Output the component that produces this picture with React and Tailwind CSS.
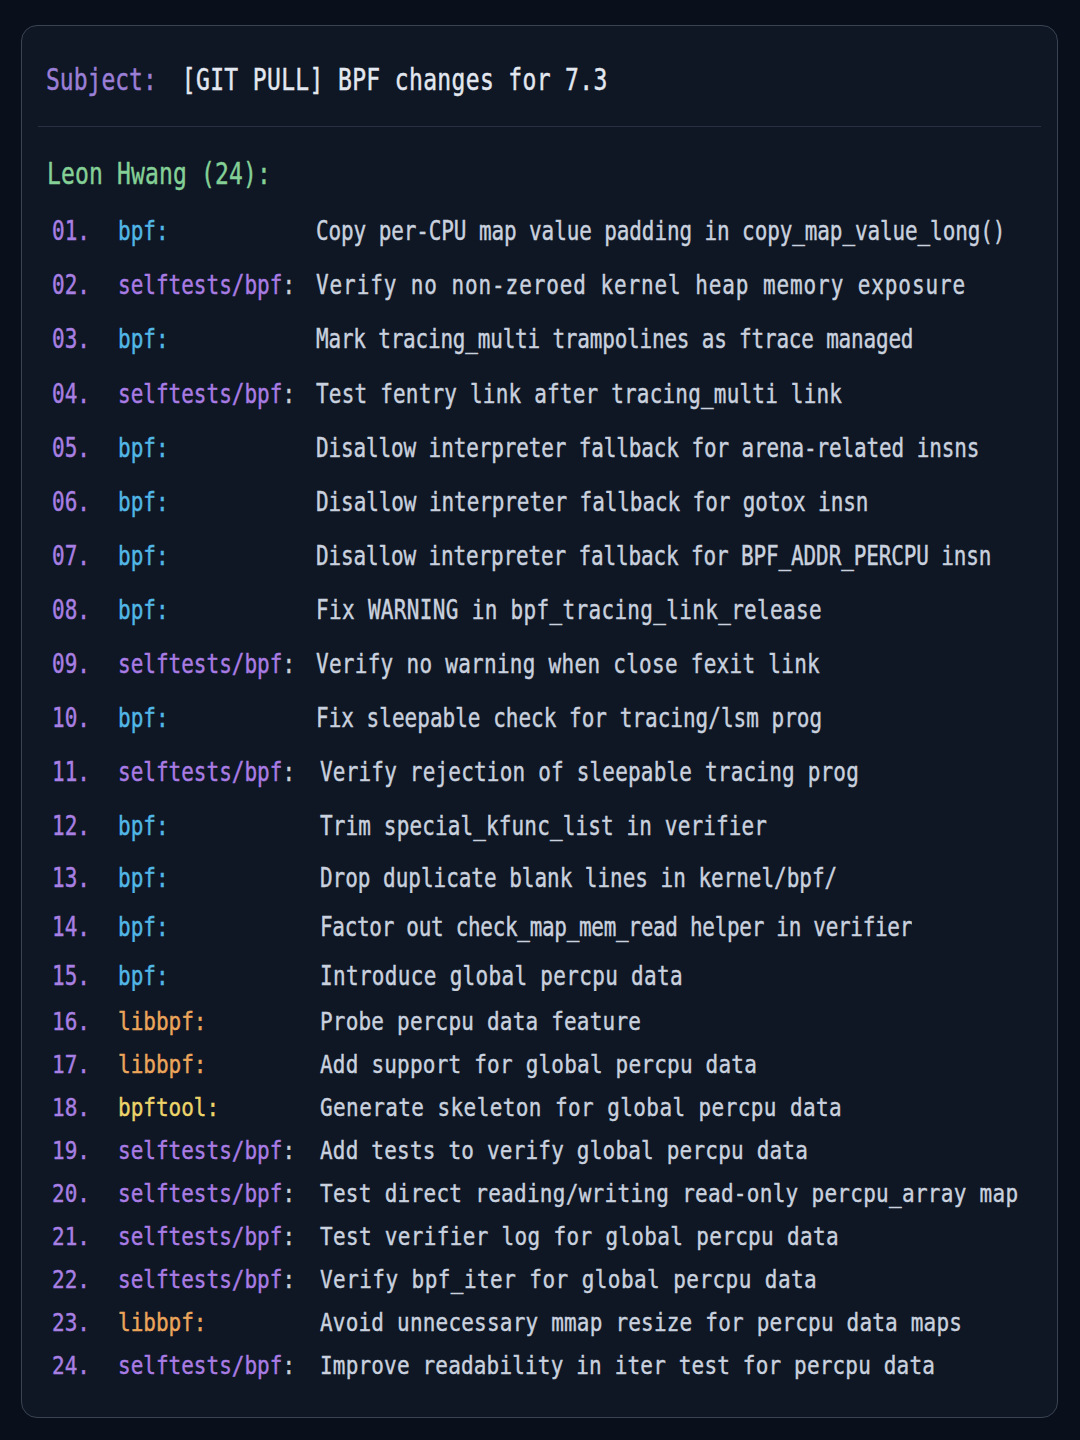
import React from "react";

const CHAR_W = 12.64;

// [number, category, description, right edge of the description in the mockup]
const rows = [
  ["01", "bpf", "Copy per-CPU map value padding in copy_map_value_long()", 1006],
  ["02", "selftests/bpf", "Verify no non-zeroed kernel heap memory exposure", 967],
  ["03", "bpf", "Mark tracing_multi trampolines as ftrace managed", 914],
  ["04", "selftests/bpf", "Test fentry link after tracing_multi link", 843],
  ["05", "bpf", "Disallow interpreter fallback for arena-related insns", 980],
  ["06", "bpf", "Disallow interpreter fallback for gotox insn", 869],
  ["07", "bpf", "Disallow interpreter fallback for BPF_ADDR_PERCPU insn", 992],
  ["08", "bpf", "Fix WARNING in bpf_tracing_link_release", 823],
  ["09", "selftests/bpf", "Verify no warning when close fexit link", 821],
  ["10", "bpf", "Fix sleepable check for tracing/lsm prog", 823],
  ["11", "selftests/bpf", "Verify rejection of sleepable tracing prog", 860],
  ["12", "bpf", "Trim special_kfunc_list in verifier", 768],
  ["13", "bpf", "Drop duplicate blank lines in kernel/bpf/", 838],
  ["14", "bpf", "Factor out check_map_mem_read helper in verifier", 913],
  ["15", "bpf", "Introduce global percpu data", 684],
  ["16", "libbpf", "Probe percpu data feature", 642],
  ["17", "libbpf", "Add support for global percpu data", 758],
  ["18", "bpftool", "Generate skeleton for global percpu data", 843],
  ["19", "selftests/bpf", "Add tests to verify global percpu data", 809],
  ["20", "selftests/bpf", "Test direct reading/writing read-only percpu_array map", 1019],
  ["21", "selftests/bpf", "Test verifier log for global percpu data", 840],
  ["22", "selftests/bpf", "Verify bpf_iter for global percpu data", 818],
  ["23", "libbpf", "Avoid unnecessary mmap resize for percpu data maps", 963],
  ["24", "selftests/bpf", "Improve readability in iter test for percpu data", 936],
];

function rowHeight(i) {
  if (i < 12) return "h-[54.1px]";
  if (i < 15) return "h-[49px]";
  return "h-[43px]";
}

function rowScale(i) {
  if (i < 12) return "scale-y-[1.3]";
  if (i < 15) return "scale-y-[1.25]";
  return "scale-y-[1.2]";
}

function Category({ name }) {
  if (name === "selftests/bpf") {
    return (
      <span>
        <span className="text-[#a97ce4]">selftests/bpf</span>
        <span className="text-[#c7cfdc]">:</span>
      </span>
    );
  }
  if (name === "libbpf") return <span className="text-[#eba55b]">libbpf:</span>;
  if (name === "bpftool") return <span className="text-[#ecd46a]">bpftool:</span>;
  return <span className="text-[#52b7e6]">bpf:</span>;
}

export default function App() {
  return (
    <div
      className="min-h-[1440px] w-[1080px] bg-[#0a101b] pt-[25px] pl-[21px] [-webkit-text-stroke:0.35px_currentColor]"
      style={{ fontFamily: '"DejaVu Sans Mono", "Liberation Mono", monospace' }}
    >
      <div className="w-[1037px] h-[1393px] rounded-2xl border border-[#3a4352] bg-[#0f1725] px-4">
        <div className="h-[100px] flex items-center pl-2 pt-2 text-[23px] whitespace-pre">
          <span className="inline-block scale-y-[1.3] text-[#9b7fd6]">Subject:</span>
          <span className="inline-block scale-y-[1.3] ml-[25px] tracking-[0.35px] text-[#e3e8f0]">
            [GIT PULL] BPF changes for 7.3
          </span>
        </div>
        <div className="h-px bg-[#283142]" />
        <div className="h-[77px] pt-[17px] flex items-center pl-[9px] text-[23px] whitespace-pre">
          <span className="inline-block scale-y-[1.3] tracking-[0.15px] text-[#84d096]">Leon Hwang (24):</span>
        </div>
        <div className="pl-[14px] pt-px">
          {rows.map(([num, cat, desc, end], i) => {
            const start = i < 10 ? 317 : 321;
            const tracking = (end - start - desc.length * CHAR_W) / desc.length;
            return (
              <div
                key={num}
                className={`flex items-center text-[21px] whitespace-pre ${rowHeight(i)}`}
              >
                <span className={`inline-block w-[66px] text-[#a87fe2] ${rowScale(i)}`}>{num}.</span>
                <span className={`inline-block ${i < 10 ? "w-[198px]" : "w-[202px]"} ${rowScale(i)}`}>
                  <Category name={cat} />
                </span>
                <span
                  className={`inline-block text-[#c9d1df] ${rowScale(i)}`}
                  style={{ letterSpacing: `${tracking.toFixed(2)}px` }}
                >
                  {desc}
                </span>
              </div>
            );
          })}
        </div>
      </div>
    </div>
  );
}
